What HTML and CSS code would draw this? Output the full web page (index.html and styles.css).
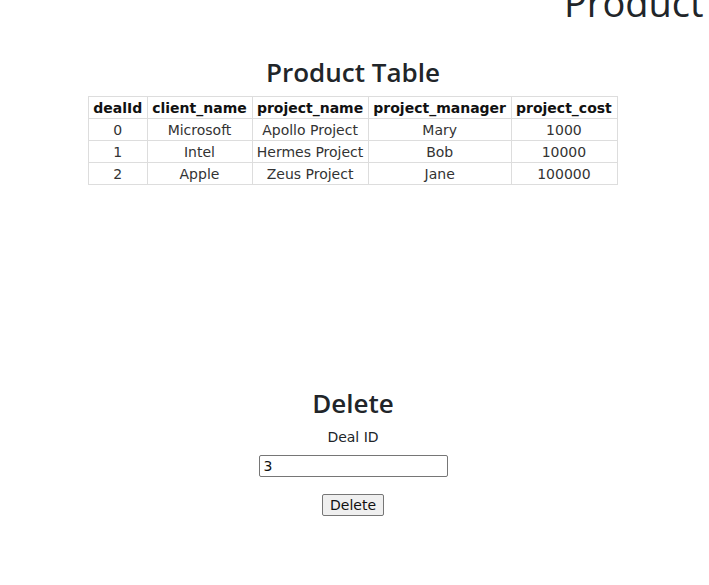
FILE: index.html
```html
<!DOCTYPE html>
<html>
<head>
<meta charset="utf-8">
<link rel="stylesheet" href="styles.css">
</head>
<body>
<div class="page">
  <h1 class="top-title">Product</h1>
  <section class="table-section">
    <h2 class="section-title">Product Table</h2>
    <table class="deals">
      <thead>
        <tr><th>dealId</th><th>client_name</th><th>project_name</th><th>project_manager</th><th>project_cost</th></tr>
      </thead>
      <tbody>
        <tr><td>0</td><td>Microsoft</td><td>Apollo Project</td><td>Mary</td><td>1000</td></tr>
        <tr><td>1</td><td>Intel</td><td>Hermes Project</td><td>Bob</td><td>10000</td></tr>
        <tr><td>2</td><td>Apple</td><td>Zeus Project</td><td>Jane</td><td>100000</td></tr>
      </tbody>
    </table>
  </section>
  <section class="delete-section">
    <h2 class="section-title">Delete</h2>
    <label class="field-label" for="dealid">Deal ID</label>
    <input id="dealid" class="field-input" type="text" value="3">
    <button class="btn">Delete</button>
  </section>
</div>
</body>
</html>
```
FILE: styles.css
```css
html, body {
  margin: 0;
  padding: 0;
  overflow: hidden;
  background: #fff;
}
body {
  width: 709px;
  height: 585px;
  color: #212529;
  font-family: "Open Sans", "Noto Sans", sans-serif;
}
.page {
  display: flex;
  flex-direction: column;
  align-items: center;
}
.top-title {
  align-self: flex-start;
  margin: -22px 0 0 564px;
  font-size: 38px;
  font-weight: 500;
  line-height: 48px;
  white-space: nowrap;
  color: #212529;
}
.table-section {
  display: flex;
  flex-direction: column;
  align-items: center;
  margin-top: 30px;
  margin-right: 3px;
}
.section-title {
  margin: 0 0 8px;
  font-size: 26px;
  font-weight: 600;
  line-height: 32px;
}
.deals {
  border-collapse: collapse;
  font-family: "DejaVu Sans", Verdana, sans-serif;
  font-size: 14px;
  color: #333;
}
.deals th, .deals td {
  border: 1px solid #ddd;
  padding: 0 5px 0 4px;
  height: 21px;
  text-align: center;
}
.deals th {
  font-weight: bold;
  color: #111;
}
.delete-section {
  display: flex;
  flex-direction: column;
  align-items: center;
  margin-top: 202px;
  margin-right: 3px;
}
.field-label {
  font-family: "DejaVu Sans", Verdana, sans-serif;
  font-size: 14px;
  margin-top: 0;
  line-height: 20px;
}
.field-input {
  margin-top: 8px;
  width: 189px;
  height: 22px;
  box-sizing: border-box;
  border: 1px solid #767676;
  border-radius: 2px;
  padding: 0 4px;
  font-family: "DejaVu Sans", Verdana, sans-serif;
  font-size: 14px;
  color: #111;
}
.btn {
  margin-top: 17px;
  height: 22px;
  padding: 0 7px;
  box-sizing: border-box;
  border: 1px solid #767676;
  border-radius: 2px;
  background: #efefef;
  font-family: "DejaVu Sans", Verdana, sans-serif;
  font-size: 14px;
  color: #111;
}
```
